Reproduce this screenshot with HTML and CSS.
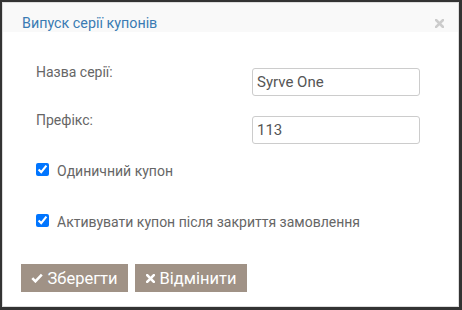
FILE: index.html
```html
<!DOCTYPE html>
<html lang="uk">
<head>
<meta charset="utf-8">
<link rel="stylesheet" href="styles.css">
</head>
<body>
<div class="modal">
  <div class="modal-header">
    <span class="title">Випуск серії купонів</span>
    <svg class="close" width="9" height="9" viewBox="0 0 9 9"><path d="M1 1L8 8M8 1L1 8" stroke="#ccc" stroke-width="2.6" stroke-linecap="square"/></svg>
  </div>
  <div class="modal-body">
    <div class="form-row">
      <label class="label">Назва серії:</label>
      <input class="input" type="text" value="Syrve One">
    </div>
    <div class="form-row second">
      <label class="label">Префікс:</label>
      <input class="input" type="text" value="113">
    </div>
    <label class="check-row first-check"><input type="checkbox" checked><span>Одиничний купон</span></label>
    <label class="check-row second-check"><input type="checkbox" checked><span>Активувати купон після закриття замовлення</span></label>
  </div>
  <div class="modal-footer">
    <button class="btn btn-save"><svg class="ico" width="12" height="10" viewBox="0 0 12 10"><path d="M1.3 5.2L4.4 8.3L10.8 1.6" fill="none" stroke="#fff" stroke-width="2.6"/></svg>Зберегти</button>
    <button class="btn btn-cancel"><svg class="ico" width="9" height="9" viewBox="0 0 9 9"><path d="M1.2 1.2L7.8 7.8M7.8 1.2L1.2 7.8" stroke="#fff" stroke-width="2.6" stroke-linecap="square"/></svg>Відмінити</button>
  </div>
</div>
</body>
</html>
```
FILE: styles.css
```css
* { box-sizing: border-box; }
html, body { margin: 0; height: 310px; }
body {
  background: #333;
  padding: 2px 3px 3px 2px;
  font-family: Roboto, "Liberation Sans", sans-serif;
}
.modal {
  background: #fff;
  border: 1px solid #ddd;
  height: 305px;
  display: flex;
  flex-direction: column;
}
.modal-header {
  height: 29px;
  background: #f9f9f9;
  display: flex;
  align-items: flex-start;
  justify-content: space-between;
  padding: 12px 14px 0 19px;
}
.title {
  color: #3a7bb3;
  font-size: 14.3px;
  line-height: 16px;
}
.close {
  display: block;
  margin-top: 4px;
}
.modal-body {
  padding: 30px 0 0 33px;
  color: #666;
  font-size: 14px;
}
.form-row {
  display: flex;
  align-items: flex-start;
  height: 34px;
}
.form-row.second { margin-top: 14px; }
.label {
  width: 216px;
  line-height: 20px;
}
.input {
  margin-top: 6px;
  width: 168px;
  height: 28px;
  border: 1px solid #ccc;
  border-radius: 3px;
  padding: 0 4px;
  font-family: Roboto, "Liberation Sans", sans-serif;
  font-size: 15px;
  color: #555;
}
.check-row {
  display: flex;
  align-items: center;
  line-height: 20px;
  height: 20px;
}
.check-row span { padding-top: 3px; }
.check-row input {
  margin: 0 8px 0 0;
  width: 13px;
  height: 13px;
}
.first-check { margin-top: 15px; }
.second-check { margin-top: 31px; }
.modal-footer {
  display: flex;
  gap: 7px;
  padding: 34px 0 0 18px;
}
.btn {
  height: 28px;
  border: none;
  background: #a09286;
  color: #fff;
  font-family: Roboto, "Liberation Sans", sans-serif;
  font-size: 16.5px;
  padding: 0;
  display: flex;
  align-items: center;
  justify-content: center;
}
.btn-save { width: 107px; }
.btn-cancel { width: 112px; }
.ico { display: block; margin-right: 4px; }
.btn-cancel .ico { margin-right: 5px; }
```
